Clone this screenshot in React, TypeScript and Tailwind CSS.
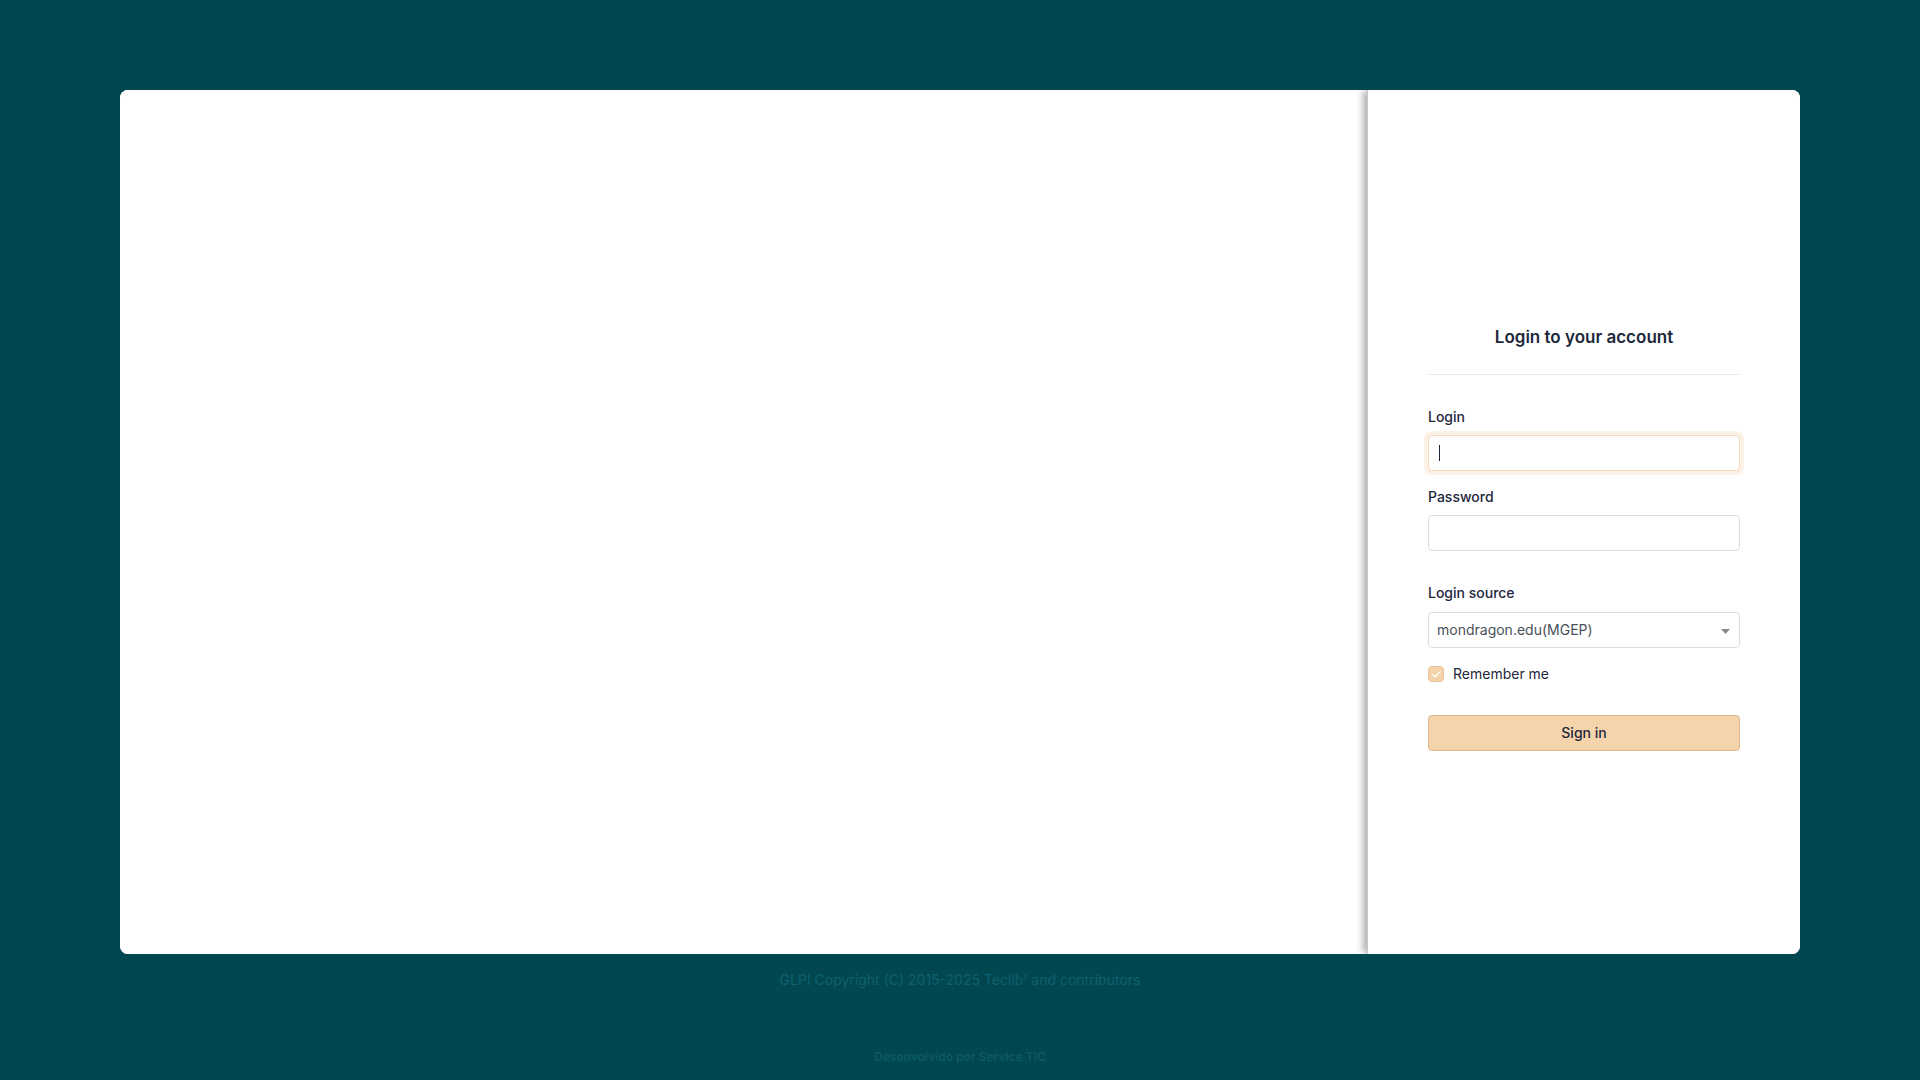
import { Check } from 'lucide-react';

const font = { fontFamily: 'Inter, "Noto Sans", sans-serif' };

function Field({ label, focused }: { label: string; focused?: boolean }) {
  return (
    <div className="flex flex-col">
      <label className="text-sm leading-5 font-medium text-[#1d273b]">{label}</label>
      <div
        className={
          focused
            ? 'mt-2 h-[36px] rounded-[4px] border border-[#f6d9b8] bg-white shadow-[0_0_0_4px_rgba(245,204,160,0.25)] flex items-center px-[10px]'
            : 'mt-2 h-[36px] rounded-[4px] border border-[#dadfe5] bg-white'
        }
      >
        {focused && <span className="block w-px h-[16px] bg-[#1d273b]" />}
      </div>
    </div>
  );
}

export default function App() {
  return (
    <div className="min-h-screen w-full bg-[#01474f] flex flex-col items-center pt-[90px]" style={font}>
      <div className="w-[1680px] h-[864px] bg-white rounded-[8px] overflow-hidden flex">
        <div className="flex-1 bg-white" />

        <div className="w-[433px] bg-white pt-[235px] pl-[60px] pr-[60px] shadow-[-5px_0_7px_-1px_rgba(0,0,0,0.32)] border-l border-[#c8c8c8]">
          <h2 className="text-[17px] leading-6 font-semibold text-[#1d273b] text-center">Login to your account</h2>
          <div className="mt-[25px] h-px bg-[#e6e8eb]" />

          <div className="mt-[32px] flex flex-col gap-4">
            <Field label="Login" focused />
            <Field label="Password" />
          </div>

          <div className="mt-[32px] flex flex-col">
            <label className="text-sm leading-5 font-medium text-[#1d273b]">Login source</label>
            <div className="mt-[9px] h-[36px] rounded-[4px] border border-[#dadfe5] bg-white flex items-center justify-between pl-[8px] pr-[9px]">
              <span className="text-sm text-[#495057]">mondragon.edu(MGEP)</span>
              <svg width="9" height="5" viewBox="0 0 9 5" className="mt-[3px]">
                <path d="M0 0h9L4.5 5z" fill="#888" />
              </svg>
            </div>
          </div>

          <div className="mt-4 flex items-center gap-[9px] h-5">
            <span className="w-[16px] h-[16px] rounded-[4px] bg-[#f5d3a9] border border-[#e6c49a] flex items-center justify-center">
              <Check className="w-[11px] h-[11px] text-white" strokeWidth={3} />
            </span>
            <span className="text-sm text-[#1d273b]">Remember me</span>
          </div>

          <button className="mt-[31px] w-full h-[36px] rounded-[4px] bg-[#f5d4ab] border border-[#dcb98f] text-sm font-medium text-[#1d273b]">
            Sign in
          </button>
        </div>
      </div>

      <p className="mt-4 text-sm leading-5 text-[#0d6170]">GLPI Copyright (C) 2015-2025 Teclib' and contributors</p>
      <p className="mt-[59px] text-xs leading-4 font-semibold text-[#0b5a66]">Desenvolvido por Service TIC</p>
    </div>
  );
}
